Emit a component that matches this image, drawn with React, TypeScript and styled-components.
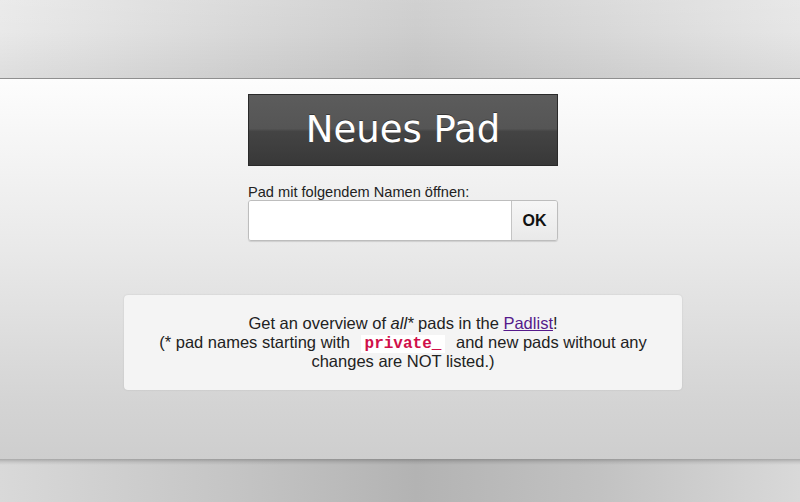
import styled, { createGlobalStyle } from "styled-components";

const GlobalStyle = createGlobalStyle`
  html, body {
    margin: 0;
    padding: 0;
    height: 100%;
  }
  body {
    font-family: "Liberation Sans", Arial, sans-serif;
    color: #333;
  }
  #root {
    height: 100%;
  }
`;

function App() {
  return (
    <>
      <GlobalStyle />
      <SCPage>
        <SCHeader />
        <SCMain>
          <SCNewPad href="#">Neues Pad</SCNewPad>
          <SCForm onSubmit={(e) => e.preventDefault()}>
            <SCLabel htmlFor="padname">Pad mit folgendem Namen öffnen:</SCLabel>
            <SCInputRow>
              <SCInput id="padname" name="padname" type="text" />
              <SCOkButton type="submit">OK</SCOkButton>
            </SCInputRow>
          </SCForm>
          <SCInfoBox>
            Get an overview of <em>all*</em> pads in the{" "}
            <SCLink href="#">Padlist</SCLink>!
            <br />
            (* pad names starting with <SCCode>private_</SCCode> and new pads
            without any changes are NOT listed.)
          </SCInfoBox>
        </SCMain>
        <SCFooter />
      </SCPage>
    </>
  );
}

const SCPage = styled.div`
  height: 502px;
  display: flex;
  flex-direction: column;
  overflow: hidden;
`;

const SCHeader = styled.header`
  height: 78px;
  flex: none;
  border-bottom: 1px solid #8f8f8f;
  background:
    linear-gradient(to bottom, rgba(255, 255, 255, 0.08) 0%, rgba(0, 0, 0, 0) 40%, rgba(0, 0, 0, 0.05) 100%),
    linear-gradient(to right, #e9e9e9 0%, #d8d8d8 30%, #cdcdcd 52%, #d8d8d8 75%, #e6e6e6 100%);
`;

const SCMain = styled.main`
  flex: 1;
  display: flex;
  flex-direction: column;
  align-items: center;
  padding: 15px 0 0 6px;
  background: linear-gradient(to bottom, #fdfdfd 0%, #e9e9e9 45%, #d4d4d4 85%, #cecece 100%);
`;

const SCNewPad = styled.a`
  display: flex;
  align-items: center;
  justify-content: center;
  box-sizing: border-box;
  width: 310px;
  height: 72px;
  border: 1px solid #2a2a2a;
  background: linear-gradient(to bottom, #5c5c5c 0%, #555 48%, #444 52%, #383838 100%);
  color: #fff;
  text-decoration: none;
  font-family: "DejaVu Sans", Verdana, sans-serif;
  font-size: 37px;
  text-shadow: 0 -1px 0 rgba(0, 0, 0, 0.4);
  padding-bottom: 2px;
`;

const SCForm = styled.form`
  width: 310px;
  margin-top: 18px;
  display: flex;
  flex-direction: column;
`;

const SCLabel = styled.label`
  font-size: 14.6px;
  line-height: 16px;
  color: #222;
`;

const SCInputRow = styled.div`
  display: flex;
  height: 41px;
  box-sizing: border-box;
  border: 1px solid #bdbdbd;
  border-radius: 3px;
  box-shadow: 0 1px 1px rgba(0, 0, 0, 0.12);
  overflow: hidden;
`;

const SCInput = styled.input`
  flex: 1;
  min-width: 0;
  border: none;
  background: #fff;
  padding: 0 8px;
  font-size: 16px;
  font-family: inherit;
  outline: none;
`;

const SCOkButton = styled.button`
  width: 46px;
  flex: none;
  border: none;
  border-left: 1px solid #c4c4c4;
  background: linear-gradient(to bottom, #f6f6f6, #e9e9e9);
  font-family: "Liberation Sans", Arial, sans-serif;
  font-weight: bold;
  font-size: 16px;
  color: #111;
  padding: 0;
  cursor: pointer;
`;

const SCInfoBox = styled.div`
  margin-top: 54px;
  box-sizing: border-box;
  width: 558px;
  height: 95px;
  padding: 19px 20px 0;
  background: #f4f4f4;
  border-radius: 4px;
  box-shadow: 0 0 2px rgba(0, 0, 0, 0.12);
  text-align: center;
  font-size: 16.5px;
  line-height: 19px;
  color: #222;
`;

const SCLink = styled.a`
  color: #551a8b;
  text-decoration: underline;
`;

const SCCode = styled.code`
  font-family: "Liberation Mono", "Courier New", monospace;
  font-weight: bold;
  font-size: 16px;
  line-height: 1;
  color: #d0104a;
  background: #fff;
  padding: 0 4px;
  margin: 0 6px;
`;

const SCFooter = styled.footer`
  height: 43px;
  flex: none;
  background:
    linear-gradient(to bottom, rgba(0, 0, 0, 0.22) 0px, rgba(0, 0, 0, 0.08) 3px, rgba(0, 0, 0, 0) 6px),
    linear-gradient(to right, #d9d9d9 0%, #c4c4c4 30%, #b3b3b3 52%, #c2c2c2 75%, #d9d9d9 100%);
`;

export default App;
